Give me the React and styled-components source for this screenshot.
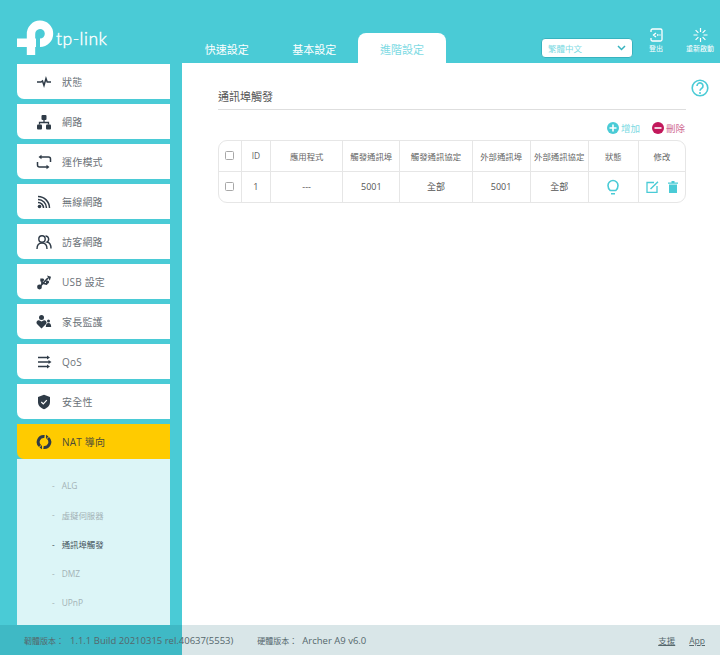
import React from 'react';
import styled, { createGlobalStyle } from 'styled-components';

const Global = createGlobalStyle`
    html, body { margin:0; padding:0; background:#fff; }
    body { font-family:"Open Sans","Noto Sans CJK TC",sans-serif; }
    * { box-sizing:border-box; }
`;

const TEAL = '#4acbd6';
const INK = '#2f3b47';

const Page = styled.div`
    position:relative;
    width:720px;
    height:655px;
    overflow:hidden;
    display:flex;
    flex-direction:column;
`;

const Header = styled.header`
    height:63px;
    background:${TEAL};
    display:flex;
    align-items:flex-end;
    flex:none;
`;

const LogoBox = styled.div`
    width:183px;
    height:63px;
    flex:none;
    display:flex;
    align-items:flex-start;
    padding:20px 0 0 17px;
    gap:2px;
`;

const LogoText = styled.span`
    font-family:"Lato","Open Sans",sans-serif;
    font-size:17.5px;
    font-weight:300;
    line-height:20px;
    color:#fff;
    margin-top:9px;
    letter-spacing:.5px;
    -webkit-text-stroke:.4px #fff;
`;

const Tabs = styled.nav`
    display:flex;
    width:358px;
    flex:none;
    height:30px;
`;

const Tab = styled.div`
    width:${p => p.$active ? '88px' : '87.5px'};
    height:30px;
    display:flex;
    align-items:center;
    justify-content:center;
    padding-top:2px;
    font-size:11px;
    border-radius:8px 8px 0 0;
    color:${p => p.$active ? '#7ddae3' : '#fff'};
    background:${p => p.$active ? '#fff' : 'transparent'};
`;

const Tools = styled.div`
    display:flex;
    align-items:flex-start;
    height:63px;
    flex:1;
    padding:28px 0 0 0;
`;

const LangSelect = styled.div`
    width:92px;
    height:20px;
    margin:10px 6px 0 0;
    background:#fff;
    border:1px solid #37b3bf;
    border-radius:4px;
    display:flex;
    align-items:center;
    justify-content:space-between;
    padding:0 6px 0 6px;
    font-size:8.5px;
    color:#7ddae3;
`;

const ToolButton = styled.div`
    width:${p => p.$w}px;
    display:flex;
    flex-direction:column;
    align-items:center;
    gap:2px;
    font-size:7px;
    line-height:9px;
    color:#fff;
    white-space:nowrap;
`;

const Body = styled.div`
    flex:1;
    display:flex;
    min-height:0;
`;

const Sidebar = styled.aside`
    width:182px;
    flex:none;
    background:${TEAL};
    padding:1px 12px 0 17px;
    display:flex;
    flex-direction:column;
    gap:5px;
`;

const MenuGroup = styled.div`
    display:flex;
    flex-direction:column;
`;

const MenuItem = styled.div`
    height:35px;
    display:flex;
    align-items:center;
    background:${p => p.$active ? '#ffcb00' : '#fff'};
    border-bottom-left-radius:7px;
    font-size:10px;
    letter-spacing:.2px;
    color:${p => p.$active ? '#4a4a3a' : '#6b7278'};
`;

const MenuIcon = styled.span`
    width:45px;
    padding-left:19px;
    display:flex;
    align-items:center;
    justify-content:flex-start;
    flex:none;
`;

const SubMenu = styled.div`
    height:166px;
    background:#dcf5f7;
    padding:12px 0 0 35px;
    display:flex;
    flex-direction:column;
`;

const SubItem = styled.div`
    height:29.3px;
    display:flex;
    align-items:center;
    gap:7px;
    font-size:8.4px;
    color:${p => p.$active ? '#45525c' : '#a3b2b6'};
`;

const Main = styled.main`
    flex:1;
    position:relative;
    background:#fff;
    padding:26px 34px 0 36px;
`;

const HelpIcon = styled.div`
    position:absolute;
    top:16px;
    right:11px;
    line-height:0;
`;

const Title = styled.h1`
    margin:0;
    height:21px;
    font-size:11px;
    font-weight:400;
    line-height:16px;
    color:#555;
    border-bottom:1px solid #dedede;
`;

const Actions = styled.div`
    display:flex;
    justify-content:flex-end;
    gap:12px;
    height:30px;
    padding:11px 1px 0 0;
`;

const Action = styled.div`
    display:flex;
    align-items:center;
    gap:2px;
    height:13px;
    font-size:9.5px;
    color:${p => p.$color};
`;

const TableWrap = styled.div`
    width:468px;
    height:63px;
    border:1.5px solid #e6e6e6;
    border-radius:9px;
    overflow:hidden;
`;

const Table = styled.table`
    width:100%;
    height:100%;
    table-layout:fixed;
    border-collapse:collapse;
`;

const Col = styled.col`
    width:${p => p.$w}px;
`;

const Th = styled.th`
    font-weight:400;
    font-size:8.4px;
    color:#666;
    padding:0;
    height:30px;
    text-align:center;
    border-right:1.5px solid #e6e6e6;
    border-bottom:1.5px solid #e6e6e6;
    white-space:nowrap;
    &:last-child { border-right:0; }
`;

const Td = styled.td`
    font-size:9px;
    color:#555;
    padding:0;
    text-align:center;
    border-right:1.5px solid #e6e6e6;
    &:last-child { border-right:0; }
`;

const CheckBox = styled.span`
    display:block;
    margin:0 auto;
    width:9px;
    height:9px;
    border:1px solid #a8a8a8;
    border-radius:1.5px;
`;

const EditCell = styled.div`
    display:flex;
    justify-content:center;
    align-items:center;
    gap:9px;
`;

const Footer = styled.footer`
    position:absolute;
    left:0;
    right:0;
    bottom:0;
    height:30px;
    background:rgba(0,88,102,.15);
    display:flex;
    align-items:center;
    padding:0 15px 0 24px;
    font-size:9.5px;
    color:#55676c;
`;

const FooterLabel = styled.span`
    font-size:8px;
    width:${p => p.$w}px;
    flex:none;
    white-space:nowrap;
`;

const FooterValue = styled.span`
    margin-right:${p => p.$gap}px;
    white-space:nowrap;
`;

const FooterLink = styled.a`
    margin-left:${p => p.$auto ? 'auto' : '14px'};
    font-size:8.5px;
    text-decoration:underline;
    color:#55676c;
`;

const Icon = ({ w = 16, h = 16, box = '0 0 16 16', children }) => (
    <svg width={w} height={h} viewBox={box} xmlns="http://www.w3.org/2000/svg" style={{ display: 'block' }}>{children}</svg>
);

const Logo = () => (
    <Icon w={37} h={36} box="0 0 37 36">
        <path d="M14 35V14A9 9 0 1 1 23 22.800" fill="none" stroke="#fff" strokeWidth="8.400" />
        <path d="M0 18.500h19v8.500H0z" fill="#fff" />
    </Icon>
);

const icons = {
    status: (
        <Icon>
            <path d="M1 8h4l1.500-1 1.500 4.500L10 4.500l1.200 3.500H15" fill="none" stroke={INK} strokeWidth="1.500" />
        </Icon>
    ),
    network: (
        <Icon>
            <rect x="5.500" y="1" width="5" height="5" rx="1" fill={INK} />
            <rect x="1" y="10.500" width="5" height="5" rx="1" fill={INK} />
            <rect x="10" y="10.500" width="5" height="5" rx="1" fill={INK} />
            <path d="M8 6v2.500M3.500 10.500V8.500h9v2" fill="none" stroke={INK} strokeWidth="1.300" />
        </Icon>
    ),
    mode: (
        <Icon>
            <path d="M4.500 3h8a2 2 0 0 1 2 2v3M11.500 13h-8a2 2 0 0 1-2-2V8" fill="none" stroke={INK} strokeWidth="1.500" />
            <path d="M5.500.8 2.500 3l3 2.200zM10.500 10.800l3 2.200-3 2.200z" fill={INK} />
        </Icon>
    ),
    wireless: (
        <Icon>
            <path d="M2 2.500A11.500 11.500 0 0 1 13.500 14M2 5.500A8.500 8.500 0 0 1 10.500 14M2 8.500A5.500 5.500 0 0 1 7.500 14" fill="none" stroke={INK} strokeWidth="1.500" />
            <circle cx="3.500" cy="12.500" r="1.800" fill={INK} />
        </Icon>
    ),
    guest: (
        <Icon>
            <circle cx="6" cy="5" r="3.200" fill="none" stroke={INK} strokeWidth="1.400" />
            <path d="M1 15c0-4 2-6 5-6s5 2 5 6" fill="none" stroke={INK} strokeWidth="1.400" />
            <path d="M9.500 2a3.200 3.200 0 0 1 1.500 6c2.500.5 4 2.500 4 6.500" fill="none" stroke={INK} strokeWidth="1.400" />
        </Icon>
    ),
    usb: (
        <Icon>
            <circle cx="3.500" cy="13" r="2.400" fill={INK} />
            <path d="M4 12.500 12 4M6 10V6.500l2-1M7.500 9.500l3 .5 1-2" fill="none" stroke={INK} strokeWidth="1.700" />
            <path d="m11 1.500 4 1.200-1.200 4z" fill={INK} />
            <rect x="4.300" y="4.500" width="3" height="3" fill={INK} />
            <circle cx="11.500" cy="8" r="1.600" fill={INK} />
        </Icon>
    ),
    parental: (
        <Icon>
            <circle cx="5.500" cy="3.500" r="2.500" fill={INK} />
            <path d="M5.500 14.500 1 10c-1.500-2 .5-4.500 2.500-3.500l2 1 2-1c2-1 4 1.500 2.500 3.500z" fill={INK} />
            <circle cx="12.500" cy="7" r="1.500" fill={INK} />
            <path d="M9.800 13c0-2.500 1-4 2.700-4s2.700 1.500 2.700 4z" fill={INK} />
        </Icon>
    ),
    qos: (
        <Icon>
            <path d="M2 3.500h10M2 8h12M2 12.500h10" stroke={INK} strokeWidth="1.500" />
            <path d="m11 1.500 3 2-3 2zM12.500 6l3 2-3 2zM11 10.500l3 2-3 2z" fill={INK} />
        </Icon>
    ),
    security: (
        <Icon>
            <path d="M8 .8 14 3v5c0 3.500-2.500 6-6 7.300C4.500 14 2 11.500 2 8V3z" fill={INK} />
            <path d="m5.300 8 2 2 3.500-3.800" fill="none" stroke="#fff" strokeWidth="1.200" />
        </Icon>
    ),
    nat: (
        <Icon>
            <path d="M8.500 2.500A5.500 5.500 0 0 0 4 12" fill="none" stroke={INK} strokeWidth="3" />
            <path d="M7.500 13.500A5.500 5.500 0 0 0 12 4" fill="none" stroke={INK} strokeWidth="3" />
            <path d="M10 .8 12.500 2.500 10 5zM6 15.200 3.500 13.500 6 11z" fill={INK} />
        </Icon>
    ),
};

const menu = [
    ['status', '狀態'],
    ['network', '網路'],
    ['mode', '運作模式'],
    ['wireless', '無線網路'],
    ['guest', '訪客網路'],
    ['usb', 'USB 設定'],
    ['parental', '家長監護'],
    ['qos', 'QoS'],
    ['security', '安全性'],
];

const subMenu = ['ALG', '虛擬伺服器', '通訊埠觸發', 'DMZ', 'UPnP'];

const heads = ['ID', '應用程式', '觸發通訊埠', '觸發通訊協定', '外部通訊埠', '外部通訊協定', '狀態', '修改'];
const widths = [22.200, 29.300, 72, 57, 72, 58, 58, 50, 46.500];

const App = () => (
    <Page>
        <Global />
        <Header>
            <LogoBox>
                <Logo />
                <LogoText>tp-link</LogoText>
            </LogoBox>
            <Tabs>
                <Tab>快速設定</Tab>
                <Tab>基本設定</Tab>
                <Tab $active>進階設定</Tab>
            </Tabs>
            <Tools>
                <LangSelect>
                    繁體中文
                    <Icon w={9} h={6} box="0 0 9 6">
                        <path d="m1 1 3.500 3.500L8 1" fill="none" stroke="#37b3bf" strokeWidth="1.500" />
                    </Icon>
                </LangSelect>
                <ToolButton $w={34}>
                    <Icon w={14} h={14} box="0 0 14 14">
                        <path d="M2 4V2.500A1.500 1.500 0 0 1 3.500 1h8A1.500 1.500 0 0 1 13 2.500v9a1.500 1.500 0 0 1-1.500 1.500h-8A1.500 1.500 0 0 1 2 11.500V10" fill="none" stroke="#fff" strokeWidth="1.300" />
                        <path d="M7 5 4.500 7 7 9M8 7h1.500M10.500 7h1" fill="none" stroke="#fff" strokeWidth="1.300" />
                    </Icon>
                    登出
                </ToolButton>
                <ToolButton $w={54}>
                    <Icon w={15} h={14} box="0 0 15 14">
                        <path d="M7.500 0v4M7.500 10v4M.5 7h4M10.500 7h4M2.600 2.100l2.800 2.800M9.600 9.100l2.800 2.800M12.400 2.100 9.600 4.900M5.400 9.100l-2.800 2.800" stroke="#fff" strokeWidth="1.200" />
                    </Icon>
                    重新啟動
                </ToolButton>
            </Tools>
        </Header>
        <Body>
            <Sidebar>
                {menu.map(([key, label]) => (
                    <MenuItem key={key}>
                        <MenuIcon>{icons[key]}</MenuIcon>
                        {label}
                    </MenuItem>
                ))}
                <MenuGroup>
                    <MenuItem $active>
                        <MenuIcon>{icons.nat}</MenuIcon>
                        NAT 導向
                    </MenuItem>
                    <SubMenu>
                        {subMenu.map((label, i) => (
                            <SubItem key={label} $active={i === 2}>
                                <span>-</span>
                                {label}
                            </SubItem>
                        ))}
                    </SubMenu>
                </MenuGroup>
            </Sidebar>
            <Main>
                <HelpIcon>
                    <Icon w={18} h={18} box="0 0 18 18">
                        <circle cx="9" cy="9" r="7.800" fill="none" stroke={TEAL} strokeWidth="1.600" />
                        <path d="M6 7a3 3 0 1 1 4.700 2.400C9.600 10.200 9 10.600 9 11.800" fill="none" stroke={TEAL} strokeWidth="1.600" />
                        <circle cx="9" cy="14" r="1" fill={TEAL} />
                    </Icon>
                </HelpIcon>
                <Title>通訊埠觸發</Title>
                <Actions>
                    <Action $color="#7ddae3">
                        <Icon w={12} h={12} box="0 0 12 12">
                            <circle cx="6" cy="6" r="6" fill={TEAL} />
                            <path d="M6 2.500v7M2.500 6h7" stroke="#fff" strokeWidth="1.600" />
                        </Icon>
                        增加
                    </Action>
                    <Action $color="#d06a92">
                        <Icon w={12} h={12} box="0 0 12 12">
                            <circle cx="6" cy="6" r="6" fill="#c2185b" />
                            <path d="M2.500 6h7" stroke="#fff" strokeWidth="1.600" />
                        </Icon>
                        刪除
                    </Action>
                </Actions>
                <TableWrap>
                    <Table>
                        <colgroup>
                            {widths.map((w, i) => <Col key={i} $w={w} />)}
                        </colgroup>
                        <thead>
                            <tr>
                                <Th><CheckBox /></Th>
                                {heads.map(h => <Th key={h}>{h}</Th>)}
                            </tr>
                        </thead>
                        <tbody>
                            <tr>
                                <Td><CheckBox /></Td>
                                <Td>1</Td>
                                <Td>---</Td>
                                <Td>5001</Td>
                                <Td>全部</Td>
                                <Td>5001</Td>
                                <Td>全部</Td>
                                <Td>
                                    <EditCell>
                                        <Icon w={12} h={16} box="0 0 12 16">
                                            <path d="M3.200 11.500C2 10.400 1 9 1 6.500a5 5 0 0 1 10 0c0 2.500-1 3.900-2.200 5zM4 14.800h4" fill="none" stroke={TEAL} strokeWidth="1.600" />
                                        </Icon>
                                    </EditCell>
                                </Td>
                                <Td>
                                    <EditCell>
                                        <Icon w={13} h={12} box="0 0 13 12">
                                            <path d="M8 1.500H1v10h10V5" fill="none" stroke={TEAL} strokeWidth="1.300" />
                                            <path d="M4.500 8 12 .8" fill="none" stroke={TEAL} strokeWidth="1.500" />
                                        </Icon>
                                        <Icon w={10} h={12} box="0 0 10 12">
                                            <path d="M0 1.500h10v1.300H0zM3.500 0h3v1.500h-3zM1 3.500h8V12H1z" fill={TEAL} />
                                        </Icon>
                                    </EditCell>
                                </Td>
                            </tr>
                        </tbody>
                    </Table>
                </TableWrap>
            </Main>
        </Body>
        <Footer>
            <FooterLabel $w={46}>韌體版本：</FooterLabel>
            <FooterValue $gap={24}>1.1.1 Build 20210315 rel.40637(5553)</FooterValue>
            <FooterLabel $w={45}>硬體版本：</FooterLabel>
            <FooterValue $gap={0}>Archer A9 v6.0</FooterValue>
            <FooterLink $auto>支援</FooterLink>
            <FooterLink>App</FooterLink>
        </Footer>
    </Page>
);

export default App;
